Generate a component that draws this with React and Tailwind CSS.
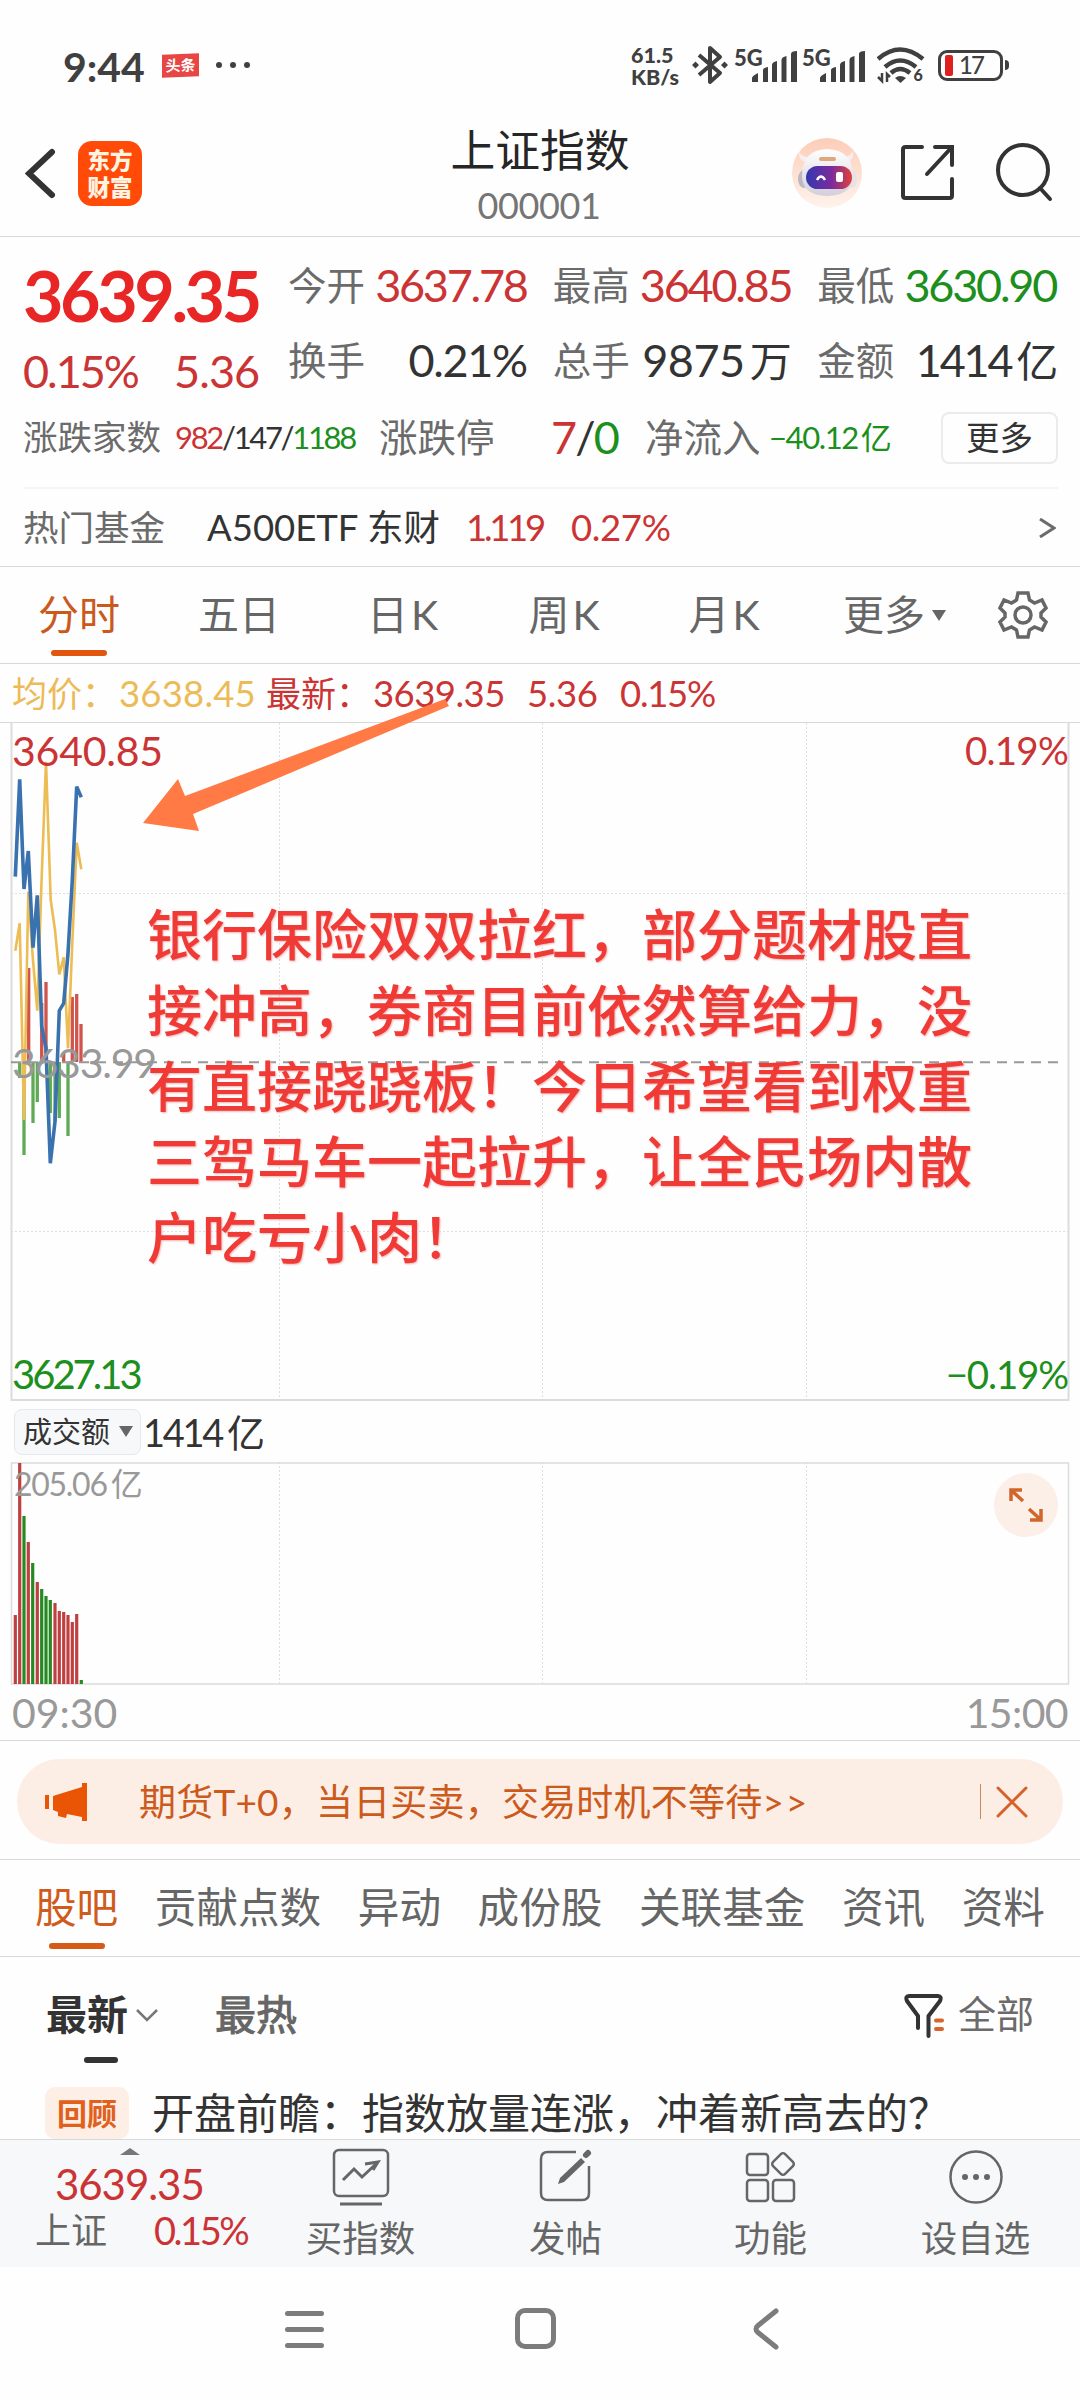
import React from "react";
import clsx from "clsx";

const UP = "text-[#cb3434]";
const DOWN = "text-[#1c8f1c]";

const KLINE_TABS = [
  { label: "分时", width: "w-[158px]", active: true },
  { label: "五日", width: "w-[162px]" },
  { label: "日K", width: "w-[165px]" },
  { label: "周K", width: "w-[158px]" },
  { label: "月K", width: "w-[162px]" },
];

const INFO_TABS = ["股吧", "贡献点数", "异动", "成份股", "关联基金", "资讯", "资料"];

// x, y de cada minuto dentro del lienzo
const PRICE_LINE =
  "15.3,876.7 19.7,779.3 24,889 28.3,851 33,947.7 37.3,895.3 41.7,1026.7 46,1048.3 50.3,1163.3 55,1121.7 59.3,1010.7 63.7,1003.3 68,953.3 72.3,880 76.7,786.7 81.3,797.3";
const AVG_LINE =
  "15.3,950.7 19.7,923.3 24,1120 28.3,891.7 32.7,956.7 37.3,1010.7 41.7,876.7 46,761.7 50.7,900 55,930 59.3,974.3 63.7,957.3 68,1048.3 72.3,943.3 76.7,842.7 81.3,869.3";

// Barras de fuerza sobre la línea de cierre anterior (y = 1062)
const FORCE_BARS = [
  [19.7, 1078], [24, 1155], [28.7, 968], [33, 1123], [37.3, 1102],
  [41.7, 1003], [46, 982], [50.3, 1113], [55, 1121], [59.3, 1118],
  [63.7, 1053], [68, 1136], [72.3, 997], [76.7, 994], [81, 1024],
];

const VOLUME_BARS = [
  [15.3, 153, "r"], [19.7, 1, "r"], [24, 54, "g"], [28.3, 80, "r"],
  [32.7, 101, "g"], [37.3, 120, "r"], [41.7, 127, "g"], [46, 134, "g"],
  [50.3, 138, "g"], [55, 141, "r"], [59.3, 149, "r"], [63.7, 150, "r"],
  [68, 153, "r"], [72.3, 160, "r"], [76.7, 152, "r"], [81.3, 218, "g"],
];

function Num({ className, track = "tracking-[-0.05em]", children }) {
  return (
    <span className={clsx("whitespace-nowrap", track, className)}>{children}</span>
  );
}

function Signal() {
  return (
    <div className="relative h-[34px] w-[61px]">
      <span className="absolute left-[-2px] top-[-1px] text-[22px] font-black leading-[22px]">5G</span>
      <svg className="absolute left-[16px] top-0" width="45" height="34" fill="#404040">
        <path d="M0 34v-4q0-2 6-5v9zM11 34V22q0-2 5-3v15zM20 34V17q0-3 5-4v21zM29.500 34V12q0-3 5-4v26zM39 34V6q0-3 6-3v31z" />
      </svg>
    </div>
  );
}

function StatusBar() {
  return (
    <div className="flex h-[130px] items-center pl-[63px] pr-[71px] text-[#404040]">
      <span className="w-[99px] pt-[2px] text-[41px] font-bold leading-none">9:44</span>
      <div className="flex h-[23px] w-[37px] -skew-y-2 items-center justify-center bg-[#e84545] text-[15px] font-bold leading-none text-white">
        头条
      </div>
      <div className="ml-[17px] flex gap-[8px]">
        <i className="size-[6px] rounded-full bg-[#404040]" />
        <i className="size-[6px] rounded-full bg-[#404040]" />
        <i className="size-[6px] rounded-full bg-[#404040]" />
      </div>
      <div className="ml-auto flex items-center">
        <div className="w-[61px] pt-px text-[21.500px] font-black leading-none">
          <div className="h-[22px] leading-[22px]">61.5</div>
          <div className="h-[22px] leading-[22px]">KB/s</div>
        </div>
        <svg width="36" height="40" viewBox="0 0 36 40" fill="none" stroke="#404040" strokeWidth="4">
          <path d="M7 10l21 18-10 9V3l10 9L7 30" strokeLinejoin="round" />
          <path d="M0 20l3.500-3.500L7 20l-3.500 3.500zM29 20l3.500-3.500L36 20l-3.500 3.500z" fill="#404040" stroke="none" />
        </svg>
        <div className="ml-[8px] flex gap-[7px]">
          <Signal />
          <Signal />
        </div>
        <svg className="ml-[12px]" width="48" height="38" viewBox="0 0 48 38" fill="none" stroke="#404040" strokeWidth="4.500">
          <path d="M1 13q22-19 45 0M8 21q15-13 31 0" />
          <path d="M14 27q9-8 19 0" />
          <path d="M18 32q5-4 11 0l-5.500 5z" fill="#404040" stroke="none" />
          <path d="M5 27v8l-4-4M10 36v-8l3 3" strokeWidth="2.500" />
          <text x="36.500" y="34.500" fontSize="16" fontWeight="900" fill="#404040" stroke="none">6</text>
        </svg>
        <div className="ml-[13px] flex h-[31px] w-[65px] items-center rounded-[9px] border-[3px] border-[#404040] pl-[4px]">
          <i className="h-[21px] w-[8px] rounded-[2px] bg-[#e01f1f]" />
          <span className="ml-[6px] text-[24px] font-medium leading-none tracking-[-0.08em]">17</span>
        </div>
        <i className="ml-[2px] h-[10px] w-[4px] rounded-r bg-[#404040]" />
      </div>
    </div>
  );
}

function Header() {
  return (
    <header className="flex h-[107px] items-start border-b border-[#d8d8d8] pl-[25px] pr-[27px]">
      <svg className="mt-[17px]" width="32" height="53" viewBox="0 0 32 53" fill="none" stroke="#333" strokeWidth="6" strokeLinecap="round">
        <path d="M27 5L4 26.500 27 48" />
      </svg>
      <div className="ml-[21px] mt-[11px] flex h-[65px] w-[64px] flex-col items-center justify-center rounded-[14px] bg-[#ff4a08] text-[22.500px] font-black leading-[27px] text-[#fff3e2]">
        <span>东方</span>
        <span>财富</span>
      </div>
      <div className="ml-[308px] flex w-[180px] flex-col items-center">
        <h1 className="mt-[-4px] whitespace-nowrap text-[44.800px] leading-[48px] text-[#262626]">上证指数</h1>
        <div className="mt-[11px] pr-[2px] text-[36px] leading-[40px] tracking-[-0.01em] text-[#757575]">000001</div>
      </div>
      <svg className="ml-auto mt-[6px]" width="72" height="74" viewBox="0 0 72 74">
        <defs>
          <linearGradient id="halo" x2="0" y2="1">
            <stop stopColor="#fccdb7" />
            <stop offset="1" stopColor="#fef3ed" />
          </linearGradient>
          <linearGradient id="visor">
            <stop stopColor="#3338b0" />
            <stop offset=".55" stopColor="#7a2c9c" />
            <stop offset="1" stopColor="#e0403c" />
          </linearGradient>
          <linearGradient id="shell" x2="0" y2="1">
            <stop stopColor="#fff" />
            <stop offset="1" stopColor="#d3cfdb" />
          </linearGradient>
        </defs>
        <circle cx="36" cy="37" r="35" fill="url(#halo)" />
        <path d="M15 26q-8-2-7-10 4 6 12 5zM56 26q8-2 6-11-4 7-11 6z" fill="#f7eeee" />
        <ellipse cx="13" cy="43" rx="6" ry="9" fill="#bdb7c2" />
        <ellipse cx="61" cy="43" rx="5" ry="9" fill="#e8e2e8" />
        <path d="M11 40q0-26 25-27 26 1 26 27 0 19-26 20-25-1-25-20" fill="url(#shell)" />
        <rect x="28" y="21" width="17" height="4" rx="2" fill="#dfa77f" />
        <rect x="15" y="30" width="46" height="23" rx="11.500" fill="url(#visor)" />
        <path d="M26 44q4-7 8 0" fill="none" stroke="#fff" strokeWidth="2.500" />
        <rect x="45" y="36" width="7" height="10" rx="2" fill="#fff" />
      </svg>
      <svg className="ml-[37px] mt-[13px]" width="56" height="58" viewBox="0 0 56 58" fill="none" stroke="#333" strokeWidth="4" strokeLinecap="round">
        <path d="M22 4H5.500Q3 4 3 6.500v46Q3 55 5.500 55h44q2.500 0 2.500-2.500V36M35 4h17v18M52 4L27 31" />
      </svg>
      <svg className="ml-[40px] mt-[12px]" width="57" height="62" viewBox="0 0 57 62" fill="none" stroke="#333" strokeWidth="4" strokeLinecap="round">
        <circle cx="27" cy="28" r="25" />
        <path d="M44 46l10 11" />
      </svg>
    </header>
  );
}

function Stat({ label, value, unit, tone = "text-[#333]", track }) {
  return (
    <div className="flex h-[75px] items-center justify-between">
      <span className="text-[38.500px] text-[#6b6b6b]">{label}</span>
      <Num className={clsx("text-[45px]", tone)} track={track}>
        {value}
        {unit && <span className="ml-[5px] text-[42px]">{unit}</span>}
      </Num>
    </div>
  );
}

function QuotePanel() {
  return (
    <section className="border-b border-[#d8d8d8] pl-[23px] pr-[22px] pt-[11px] leading-none">
      <div className="flex">
        <div className="w-[265px]">
          <div className="flex h-[94px] items-center">
            <Num className="text-[70px] font-bold text-[#e92626]">3639.35</Num>
          </div>
          <div className="flex h-[58px] items-center">
            <Num className={clsx("w-[151px] text-[45px]", UP)} track="tracking-[-0.045em]">0.15%</Num>
            <Num className={clsx("text-[45px]", UP)} track="tracking-[-0.02em]">5.36</Num>
          </div>
        </div>
        <div className="grid w-[768px] grid-cols-3 gap-x-[26px] pb-[2px]">
          <Stat label="今开" value="3637.78" tone={UP} />
          <Stat label="最高" value="3640.85" tone={UP} />
          <Stat label="最低" value="3630.90" tone={DOWN} />
          <Stat label="换手" value="0.21%" track="tracking-[-0.03em]" />
          <Stat label="总手" value="9875" unit="万" track="tracking-[-0.01em]" />
          <Stat label="金额" value="1414" unit="亿" track="tracking-[-0.05em]" />
        </div>
      </div>

      <div className="flex h-[75px] items-center text-[#333]">
        <span className="w-[152px] text-[34.500px] text-[#6b6b6b]">涨跌家数</span>
        <Num className="w-[204px] text-[31px]" track="tracking-[-0.075em]">
          <span className={UP}>982</span>/147/<span className={DOWN}>1188</span>
        </Num>
        <span className="w-[172px] text-[38.500px] text-[#6b6b6b]">涨跌停</span>
        <Num className="w-[94px] text-[45px]" track="tracking-[-0.04em]">
          <span className={UP}>7</span>/<span className={DOWN}>0</span>
        </Num>
        <span className="w-[124px] text-[38.500px] text-[#6b6b6b]">净流入</span>
        <Num className={clsx("text-[31px]", DOWN)} track="tracking-[-0.045em]">
          −40.12<span className="ml-[3px]">亿</span>
        </Num>
        <button className="ml-auto h-[52px] w-[117px] rounded-[8px] border-2 border-[#ebebeb] text-[33.500px]">
          更多
        </button>
      </div>

      <div className="mt-[12px] flex h-[79px] items-center border-t-2 border-[#f5f5f5] text-[36.500px] text-[#333]">
        <span className="w-[184px] text-[35.500px] text-[#6b6b6b]">热门基金</span>
        <span className="w-[259px] whitespace-nowrap">A500ETF 东财</span>
        <Num className={clsx("w-[105px]", UP)} track="tracking-[-0.09em]">1.119</Num>
        <Num className={UP} track="tracking-[-0.01em]">0.27%</Num>
        <svg className="ml-auto mr-[2px]" width="17" height="20" fill="none" stroke="#6b6b6b" strokeWidth="3">
          <path d="M1 1l14 9-14 9" />
        </svg>
      </div>
    </section>
  );
}

function KlineTabs() {
  return (
    <nav className="flex h-[97px] items-stretch border-b border-[#d8d8d8] text-[41px] leading-none text-[#666]">
      {KLINE_TABS.map((tab) => (
        <div
          key={tab.label}
          className={clsx("flex flex-col items-center pt-[27px]", tab.width, tab.active && "text-[#c9591c]")}
        >
          <span className="flex gap-[3px] whitespace-nowrap">
            {tab.label.endsWith("K") ? (
              <>
                {tab.label[0]}
                <span>K</span>
              </>
            ) : (
              tab.label
            )}
          </span>
          {tab.active && <i className="mt-[15px] h-[6px] w-[56px] rounded-full bg-[#e2570f]" />}
        </div>
      ))}
      <div className="ml-[38px] flex items-start pt-[27px]">
        更多
        <i className="ml-[7px] mt-[16px] border-x-[7px] border-t-[11px] border-x-transparent border-t-[#666]" />
      </div>
      <svg className="ml-auto mr-[32px] mt-[23px]" width="50" height="50" viewBox="0 0 50 50" fill="none" stroke="#666" strokeWidth="3.500">
        <path d="M20 3h10l1.500 7 5 3 7.500-3 4 8-5 5v4l5 5-4 8-7.500-3-5 3L30 47H20l-1.500-7-5-3L6 40l-4-8 5-5v-4l-5-5 4-8 7.500 3 5-3z" />
        <circle cx="25" cy="25" r="8" />
      </svg>
    </nav>
  );
}

function PriceChart() {
  return (
    <section className="text-[38px] leading-none">
      <div className={clsx("flex h-[59px] items-center border-b border-[#d8d8d8] pl-[12px] text-[36.500px]", UP)}>
        <span className="w-[107px] whitespace-nowrap text-[35px] text-[#ecbb58]">均价：</span>
        <Num className="w-[147px] text-[#ecbb58]" track="tracking-[0.005em]">3638.45</Num>
        <span className="w-[107px] whitespace-nowrap text-[35px]">最新：</span>
        <Num className="w-[154px]" track="tracking-[-0.015em]">3639.35</Num>
        <Num className="w-[93px]" track="tracking-[-0.01em]">5.36</Num>
        <Num track="tracking-[-0.035em]">0.15%</Num>
      </div>

      <div className="relative h-[678px]">
        <svg className="block" width="1080" height="678" viewBox="0 723 1080 678" fill="none">
          <path d="M279.500 723v678M542.500 723v678M806.500 723v678M11 893.500h1058M11 1231.500h1058" stroke="#dedede" strokeDasharray="2 2" />
          <path d="M11.500 723v677h1057V723" stroke="#dcdcdc" strokeWidth="2" />
          {FORCE_BARS.map(([x, y]) => (
            <path key={x} d={`M${x} 1062V${y}`} stroke={y < 1062 ? "#d0544c" : "#5fab55"} strokeWidth="3.300" />
          ))}
          <polyline points={AVG_LINE} stroke="#ecbc55" strokeWidth="2.600" />
          <polyline points={PRICE_LINE} stroke="#3a72b0" strokeWidth="3.600" />
          <path d="M11 1062.300h1050" stroke="#999" strokeWidth="2" strokeDasharray="10 7" />
        </svg>
        <Num className={clsx("absolute left-[12px] top-[7px] text-[41px]", UP)} track="tracking-[-0.005em]">3640.85</Num>
        <Num className={clsx("absolute right-[12px] top-[8px] text-[38.500px]", UP)} track="tracking-[-0.02em]">0.19%</Num>
        <Num className="absolute left-[12px] top-[319px] text-[41px] text-[#999]" track="tracking-[-0.03em]">3633.99</Num>
        <Num className={clsx("absolute left-[12px] top-[631px] text-[40px]", DOWN)} track="tracking-[-0.075em]">3627.13</Num>
        <Num className={clsx("absolute right-[12px] top-[632px] text-[38.500px]", DOWN)} track="tracking-[-0.03em]">−0.19%</Num>

        {/* Anotación a mano sobre el gráfico */}
        <svg className="absolute left-[140px] top-[-27px]" width="312" height="140" viewBox="140 696 312 140">
          <path d="M143 823l35-44 7 17 260-97 4 7-256 108 6 17z" fill="#ff7a45" />
        </svg>
        <p className="absolute left-[147px] top-[174px] w-[840px] text-[55px] font-medium leading-[75.800px] text-[#f03a36] [text-shadow:1px_1px_2px_#eeb5b5]">
          银行保险双双拉红，部分题材股直
          <br />
          接冲高，券商目前依然算给力，没
          <br />
          有直接跷跷板！今日希望看到权重
          <br />
          三驾马车一起拉升，让全民场内散
          <br />
          户吃亏小肉！
        </p>
      </div>

      <div className="flex h-[61px] items-center pl-[14px] text-[#333]">
        <button className="flex h-[46px] w-[127px] items-center rounded-[8px] border border-[#e6e8ee] bg-[#f7f8fa] pl-[8px] text-[29px]">
          成交额
          <i className="ml-[9px] border-x-[7px] border-t-[11px] border-x-transparent border-t-[#666]" />
        </button>
        <Num className="ml-[2px] text-[38px]" track="tracking-[-0.06em]">
          1414<span className="ml-[5px]">亿</span>
        </Num>
      </div>

      <div className="relative h-[223px]">
        <svg className="block" width="1080" height="223" fill="none">
          <path d="M279.500 0v222M542.500 0v222M806.500 0v222" stroke="#dedede" strokeDasharray="2 2" />
          <path d="M11.500 1h1057v221h-1057z" stroke="#dcdcdc" strokeWidth="1.500" />
          {VOLUME_BARS.map(([x, y, tone]) => (
            <path key={x} d={`M${x} 222V${y}`} stroke={tone === "r" ? "#bf4040" : "#258a22"} strokeWidth="3.200" />
          ))}
        </svg>
        <Num className="absolute left-[14px] top-[6px] text-[32px] text-[#999]" track="tracking-[-0.04em]">
          205.06<span className="ml-[4px]">亿</span>
        </Num>
        <div className="absolute right-[22px] top-[11px] flex size-[64px] items-center justify-center rounded-full bg-[#fcefe8]">
          <svg width="34" height="34" viewBox="0 0 34 34" fill="none" stroke="#d0662c" strokeWidth="3.500">
            <path d="M2 13V2h11M3 3l11 10M32 21v11H21M31 31L20 21" />
          </svg>
        </div>
      </div>

      <div className="flex h-[56px] items-center justify-between border-b border-[#d8d8d8] pl-[12px] pr-[12px] text-[41px] text-[#999]">
        <Num track="tracking-[0em]">09:30</Num>
        <Num track="tracking-[-0.015em]">15:00</Num>
      </div>
    </section>
  );
}

function Banner() {
  return (
    <div className="border-b border-[#d8d8d8] px-[17px] pb-[15px] pt-[18px]">
      <div className="flex h-[85px] items-center rounded-full bg-[#fceee5] pl-[27px] pr-[35px] leading-none text-[#cc5a1c]">
        <svg width="44" height="40" viewBox="0 0 44 40" fill="#e95504">
          <path d="M1 13h4v14H1zM9 14l29-9V1h5v38h-5v-4l-15-3-1 4-8-2v-4l-5-2z" />
        </svg>
        <span className="ml-[51px] whitespace-nowrap text-[37px] tracking-[0.2px]">
          期货T+0，当日买卖，交易时机不等待<span className="tracking-[2px]">&gt;&gt;</span>
        </span>
        <i className="ml-auto h-[35px] w-[1.500px] bg-[#c9875c]" />
        <svg className="ml-[15px]" width="32" height="32" fill="none" stroke="#d8602a" strokeWidth="3" strokeLinecap="round">
          <path d="M2 2l28 28M30 2L2 30" />
        </svg>
      </div>
    </div>
  );
}

function InfoTabs() {
  return (
    <nav className="flex h-[97px] justify-between border-b border-[#d8d8d8] pl-[35px] pr-[35px] pt-[27px] text-[41.600px] leading-none text-[#666]">
      {INFO_TABS.map((label, i) => (
        <div key={label} className={clsx("flex flex-col items-center whitespace-nowrap", i === 0 && "text-[#cf5c1c]")}>
          {label}
          {i === 0 && <i className="mt-[14px] h-[6px] w-[56px] rounded-full bg-[#d55b16]" />}
        </div>
      ))}
    </nav>
  );
}

function Posts() {
  return (
    <section className="h-[183px] overflow-hidden border-b border-[#d8d8d8] leading-none">
      <div className="flex h-[107px] items-start pl-[46px] pr-[46px] pt-[37px] text-[41px]">
        <div className="relative flex font-bold text-[#333]">
          最新
          <svg className="ml-[8px] mt-[15px]" width="22" height="14" fill="none" stroke="#777" strokeWidth="2.500">
            <path d="M1 1l10 10L21 1" />
          </svg>
          <i className="absolute left-[38px] top-[63px] h-[6px] w-[34px] rounded-full bg-[#333]" />
        </div>
        <span className="ml-[57px] text-[#666] [-webkit-text-stroke:1px_#666]">最热</span>
        <svg className="ml-auto" width="42" height="44" viewBox="0 0 42 44" fill="none" stroke="#333" strokeWidth="4" strokeLinecap="round" strokeLinejoin="round">
          <path d="M14 34V22L3 7Q1 2 5 2h29q4 0 2 5L24.500 22v20" />
          <path d="M32 26.500h6M32 35h6" stroke="#d9642a" />
        </svg>
        <span className="ml-[12px] text-[38px] text-[#6b6b6b]">全部</span>
      </div>
      <div className="mt-[22px] flex h-[53px] items-center pl-[45px]">
        <span className="flex h-[52px] w-[84px] items-center justify-center rounded-[10px] bg-[#fdeee6] text-[30px] font-bold text-[#e0601c]">
          回顾
        </span>
        <span className="ml-[23px] whitespace-nowrap text-[42px] text-[#333]">
          开盘前瞻：指数放量连涨，冲着新高去的？
        </span>
      </div>
    </section>
  );
}

function NavItem({ label, children }) {
  return (
    <div className="flex w-[205px] flex-col items-center pt-[6px]">
      <svg width="60" height="62" viewBox="0 0 60 62" fill="none" stroke="#666" strokeWidth="2.500">
        {children}
      </svg>
      <span className="mt-[12px] whitespace-nowrap text-[36.500px]">{label}</span>
    </div>
  );
}

function BottomNav() {
  return (
    <nav className="flex h-[127px] bg-[#f7f8fa] leading-none text-[#666]">
      <div className="w-[258px]">
        <i className="ml-[120px] mt-[8px] block w-0 border-x-[10px] border-b-[7px] border-x-transparent border-b-[#777]" />
        <Num className={clsx("ml-[55px] mt-[8px] block text-[42px]", UP)} track="tracking-[-0.025em]">3639.35</Num>
        <div className="mt-[6px] flex items-center pl-[35px]">
          <span className="w-[119px] text-[36px]">上证</span>
          <Num className={clsx("text-[38px]", UP)} track="tracking-[-0.065em]">0.15%</Num>
        </div>
      </div>
      <NavItem label="买指数">
        <rect x="3" y="4" width="54" height="46" rx="5" />
        <path d="M9 58h42M12 34l11-11 8 8 15-14M34 18l13-2-5 8" strokeWidth="3" />
      </NavItem>
      <NavItem label="发帖">
        <path d="M40 6H12q-7 0-7 7v34q0 7 7 7h34q7 0 7-7V20" />
        <path d="M22 38l2-6 21-20 4 4-21 20z" fill="#666" stroke="none" />
        <path d="M50 9l2-2" strokeWidth="6" strokeLinecap="round" />
      </NavItem>
      <NavItem label="功能">
        <rect x="6" y="8" width="21" height="21" rx="3" />
        <rect x="6" y="34" width="21" height="21" rx="3" />
        <rect x="32" y="34" width="21" height="21" rx="3" />
        <rect x="33.500" y="9.500" width="17" height="17" rx="3" transform="rotate(45 42 18)" />
      </NavItem>
      <NavItem label="设自选">
        <circle cx="30" cy="31" r="25.500" />
        <g fill="#666" stroke="none">
          <circle cx="19" cy="31" r="3" />
          <circle cx="30" cy="31" r="3" />
          <circle cx="41" cy="31" r="3" />
        </g>
      </NavItem>
    </nav>
  );
}

function SystemNav() {
  return (
    <div className="flex h-[133px] items-start pl-[285px] pt-[41px]">
      <div className="flex w-[39px] flex-col gap-[11px] pt-[3px]">
        <i className="h-[5px] rounded-full bg-[#7c7c7c]" />
        <i className="h-[5px] rounded-full bg-[#7c7c7c]" />
        <i className="h-[5px] rounded-full bg-[#7c7c7c]" />
      </div>
      <i className="ml-[191px] size-[41px] rounded-[10px] border-[5px] border-[#7c7c7c]" />
      <svg className="ml-[196px]" width="28" height="42" fill="none" stroke="#7c7c7c" strokeWidth="5" strokeLinecap="round">
        <path d="M24 3L6 17.500q-4 3.500 0 7L24 39" />
      </svg>
    </div>
  );
}

export default function App() {
  return (
    <div className="h-[2400px] w-[1080px] overflow-hidden bg-[#fefefe] font-[Lato,'Noto_Sans_CJK_SC',sans-serif]">
      <StatusBar />
      <Header />
      <QuotePanel />
      <KlineTabs />
      <PriceChart />
      <Banner />
      <InfoTabs />
      <Posts />
      <BottomNav />
      <SystemNav />
    </div>
  );
}
